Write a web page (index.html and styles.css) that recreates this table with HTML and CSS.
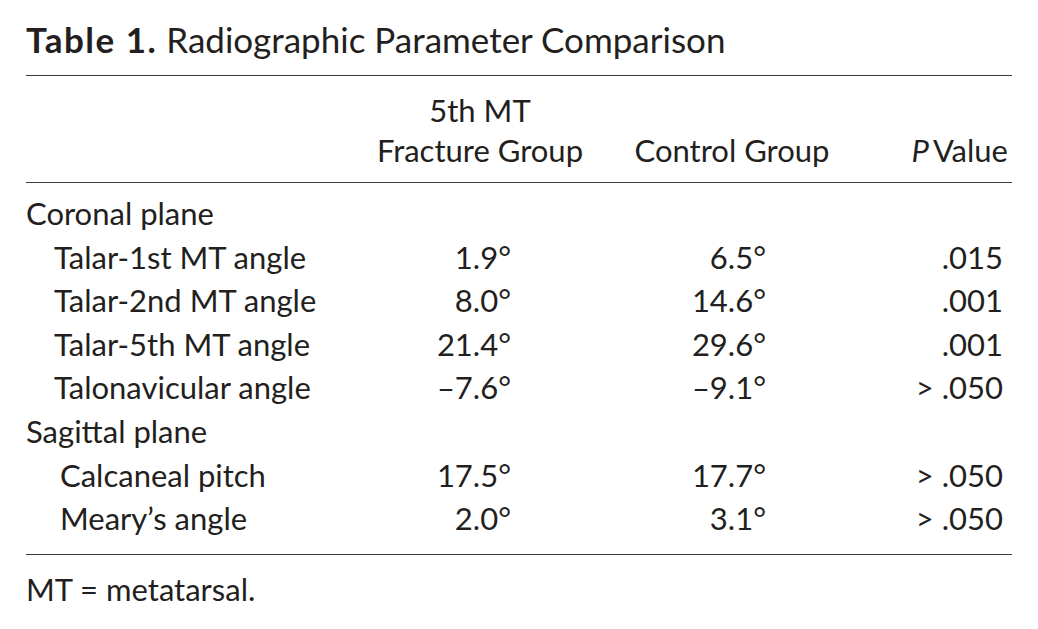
FILE: index.html
```html
<!DOCTYPE html>
<html lang="en">
<head>
<meta charset="utf-8">
<title>Table 1. Radiographic Parameter Comparison</title>
<link rel="stylesheet" href="styles.css">
</head>
<body>
<div class="page">
  <h1 class="title"><span class="label">Table 1.</span> Radiographic Parameter Comparison</h1>
  <table class="data">
    <colgroup>
      <col class="c-label">
      <col class="c-frac">
      <col class="c-ctrl">
      <col class="c-p">
    </colgroup>
    <thead>
      <tr>
        <th class="h-label"></th>
        <th class="h-frac">5th MT<br>Fracture Group</th>
        <th class="h-ctrl">Control Group</th>
        <th class="h-p"><i>P</i>&#8201;Value</th>
      </tr>
    </thead>
    <tbody>
      <tr class="group first"><td colspan="4">Coronal plane</td></tr>
      <tr class="item"><td class="name">Talar-1st MT angle</td><td class="v1">1.9°</td><td class="v2">6.5°</td><td class="v3">.015</td></tr>
      <tr class="item"><td class="name">Talar-2nd MT angle</td><td class="v1">8.0°</td><td class="v2">14.6°</td><td class="v3">.001</td></tr>
      <tr class="item"><td class="name">Talar-5th MT angle</td><td class="v1">21.4°</td><td class="v2">29.6°</td><td class="v3">.001</td></tr>
      <tr class="item"><td class="name">Talonavicular angle</td><td class="v1">–7.6°</td><td class="v2">–9.1°</td><td class="v3">&gt; .050</td></tr>
      <tr class="group"><td colspan="4">Sagittal plane</td></tr>
      <tr class="item sub2"><td class="name">Calcaneal pitch</td><td class="v1">17.5°</td><td class="v2">17.7°</td><td class="v3">&gt; .050</td></tr>
      <tr class="item sub2 last"><td class="name">Meary’s angle</td><td class="v1">2.0°</td><td class="v2">3.1°</td><td class="v3">&gt; .050</td></tr>
    </tbody>
  </table>
  <p class="note">MT = metatarsal.</p>
</div>
</body>
</html>
```
FILE: styles.css
```css
html, body {
  margin: 0;
  padding: 0;
  background: #ffffff;
}

body {
  font-family: "Lato", "Open Sans", "Liberation Sans", sans-serif;
  color: #231f20;
}

.page {
  width: 986px;
  padding: 19px 26px 0 26px;
}

.title {
  margin: 0 0 16px 0;
  font-size: 35px;
  line-height: 40px;
  font-weight: 400;
  white-space: nowrap;
}

.title .label {
  font-weight: 700;
  letter-spacing: 1.5px;
}

.data {
  width: 986px;
  border-collapse: collapse;
  table-layout: fixed;
  border-top: 1.5px solid #3a3a3a;
  border-bottom: 1.5px solid #3a3a3a;
  font-size: 31px;
}

.c-label { width: 334px; }
.c-frac { width: 240px; }
.c-ctrl { width: 264px; }
.c-p { width: 148px; }

.data thead th {
  font-weight: 400;
  line-height: 40px;
  padding: 14px 0 12px 0;
  vertical-align: bottom;
  border-bottom: 1.5px solid #3a3a3a;
  white-space: nowrap;
}

.h-frac, .h-ctrl {
  text-align: center;
}

.data thead th.h-p {
  text-align: right;
  padding-right: 4px;
}

.data tbody td {
  padding: 0;
  line-height: 43.6px;
  white-space: nowrap;
}

.group td {
  text-align: left;
}

.item .name {
  padding-left: 28px;
}

.item.sub2 .name {
  padding-left: 34px;
}

.v1, .v2, .v3 {
  text-align: right;
}

.data tbody td.v1 { padding-right: 89px; }
.data tbody td.v2 { padding-right: 98px; }
.data tbody td.v3 { padding-right: 9px; }

.data tbody tr.first td { padding-top: 9px; }
.data tbody tr.last td { padding-bottom: 13px; }

.note {
  margin: 14px 0 0 0;
  font-size: 31px;
  line-height: 40px;
}
```
